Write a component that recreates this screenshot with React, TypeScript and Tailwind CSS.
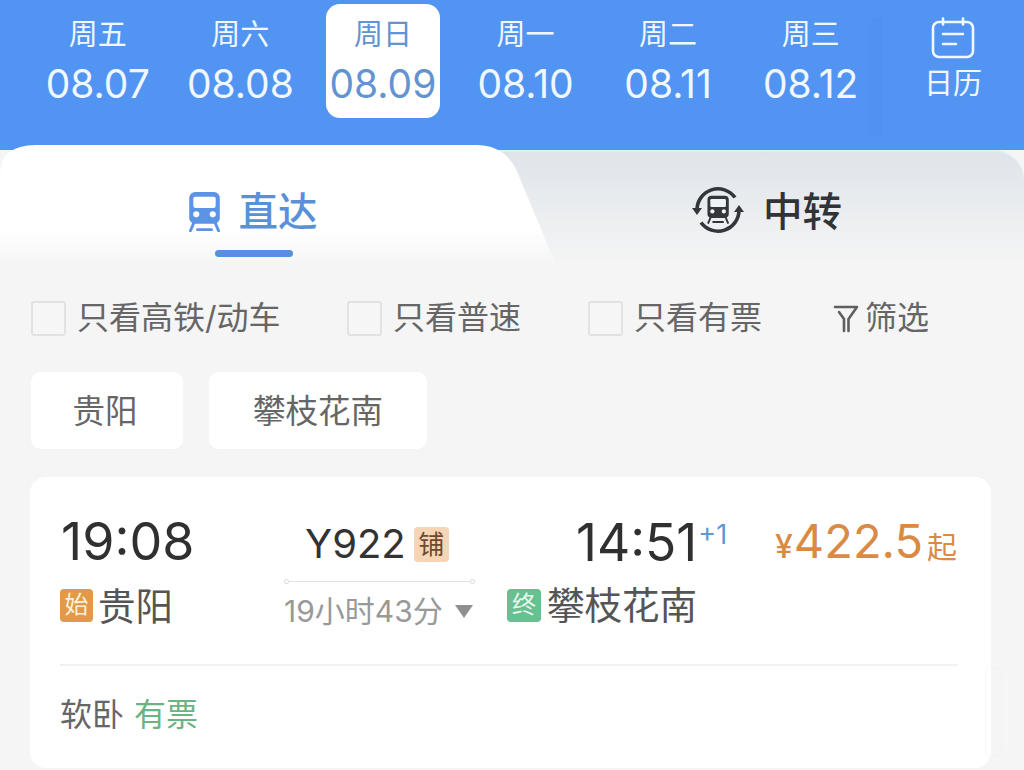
import React from 'react';

const days = [
  { week: '周五', date: '08.07' },
  { week: '周六', date: '08.08' },
  { week: '周日', date: '08.09', active: true },
  { week: '周一', date: '08.10' },
  { week: '周二', date: '08.11' },
  { week: '周三', date: '08.12' },
];

const TrainShape = ({ body, glass }: { body: string; glass: string }) => (
  <>
    <rect x="3" y="1" width="26" height="27" rx="5" fill={body} />
    <rect x="6.5" y="5" width="19" height="9.5" rx="1.5" fill={glass} />
    <circle cx="9" cy="20" r="2.6" fill={glass} />
    <circle cx="23" cy="20" r="2.6" fill={glass} />
    <path d="M7 27 4 34M25 27l3 7M10 33h12" stroke={body} strokeWidth="2.4" strokeLinecap="round" fill="none" />
  </>
);

const Checkbox = () => (
  <span className="block w-[35px] h-[35px] shrink-0 rounded-[3px] border-2 border-[#e2e2e2] bg-[#f6f6f6]" />
);

const App: React.FC = () => {
  return (
    <div className="relative w-[1024px] h-[770px] overflow-hidden bg-[#f5f5f5] font-['Inter','Noto_Sans_CJK_SC',sans-serif]">
      {/* date strip */}
      <header className="flex h-[150px] pl-[26.5px] pt-[4px] bg-[#5294f2] text-[#f0f7ff]">
        {days.map((d) => (
          <div key={d.date} className="w-[142.6px] flex justify-center">
            <div
              className={`flex flex-col items-center w-[114px] h-[114px] rounded-[14px] ${
                d.active ? 'bg-white text-[#6393d0]' : ''
              }`}
            >
              <span className="mt-[9px] text-[29px] leading-[44px]">{d.week}</span>
              <span className="mt-[3px] text-[39px] leading-[48px] whitespace-nowrap">{d.date}</span>
            </div>
          </div>
        ))}
        <div className="relative flex flex-col items-center w-[142px]">
          <span className="absolute left-[-18px] top-[14px] w-[18px] h-[118px] bg-gradient-to-r from-transparent to-[#5091ef]" />
          <svg className="mt-[13px] w-[44px] h-[42px]" viewBox="0 0 44 42" fill="none" stroke="#f0f7ff" strokeWidth="2.6" strokeLinecap="round">
            <rect x="2" y="5" width="40" height="35" rx="6" />
            <path d="M12 1.5v6M32 1.5v6M12 17h20M12 27h13" />
          </svg>
          <span className="mt-[5px] text-[29px] leading-[40px]">日历</span>
        </div>
      </header>

      {/* direct / transfer tabs */}
      <div className="relative flex h-[115px] rounded-t-[30px] border-t-2 border-[#dcf0f6] bg-gradient-to-b from-[#dfe4ea] to-[#f5f5f5]">
        <div className="absolute left-0 top-[-7px] w-[556px] h-[120px] bg-gradient-to-b from-white from-[70%] to-[#f5f5f5] [clip-path:path('M0_30Q0_0_36_0L476_0Q504_0_516_24L556_120L0_120Z')]" />
        <div className="relative w-[510px] flex flex-col items-center">
          <div className="flex items-center gap-[17px] mt-[37px] -ml-[6px] text-[#5a90d8]">
            <svg className="w-[35px] h-[40px]" viewBox="3 1 26 34">
              <TrainShape body="#5b94e4" glass="#ffffff" />
            </svg>
            <span className="text-[39.5px] leading-[46px] font-medium">直达</span>
          </div>
          <span className="mt-[15px] -ml-[2px] w-[78px] h-[7px] rounded-full bg-[#5590e0]" />
        </div>
        <div className="relative flex items-start gap-[18px] pl-[181px] pt-[31px] text-[#303338]">
          <svg className="w-[54px] h-[54px] shrink-0" viewBox="0 0 54 54" fill="none">
            <path d="M6 27A21 21 0 0 1 44 14.5M48 27A21 21 0 0 1 10 39.5" stroke="#33363a" strokeWidth="3.6" />
            <path d="M1 25h10l-5 7zM53 29H43l5-7z" fill="#33363a" />
            <g transform="translate(14 12) scale(.82)">
              <TrainShape body="#33363a" glass="#f0f2f4" />
            </g>
          </svg>
          <span className="mt-[6px] text-[39.5px] leading-[46px] font-medium">中转</span>
        </div>
      </div>

      {/* filters */}
      <div className="flex items-center h-[35px] mt-[36px] pl-[31px] text-[32px] text-[#666666] whitespace-nowrap">
        <Checkbox />
        <span className="ml-[11px] w-[270px] -translate-y-px">只看高铁/动车</span>
        <Checkbox />
        <span className="ml-[11px] w-[195px] -translate-y-px">只看普速</span>
        <Checkbox />
        <span className="ml-[11px] w-[199px] -translate-y-px">只看有票</span>
        <svg className="w-[26px] h-[30px]" viewBox="0 0 26 30" fill="none" stroke="#5f5f5f" strokeWidth="2.6" strokeLinejoin="round" strokeLinecap="round">
          <path d="M2 3h22l-8.5 12v12M11 27V15L6 8" />
        </svg>
        <span className="ml-[6px] -translate-y-px">筛选</span>
      </div>

      {/* stations */}
      <div className="flex gap-[26px] mt-[36px] ml-[31px] text-[32.5px] text-[#666666]">
        <div className="flex items-center justify-center w-[152px] h-[77px] pr-[4px] pt-[3px] rounded-[10px] bg-white">贵阳</div>
        <div className="flex items-center justify-center w-[218px] h-[77px] pt-[3px] rounded-[10px] bg-white">攀枝花南</div>
      </div>

      {/* train card */}
      <div className="mt-[28px] ml-[30px] w-[961px] h-[291px] rounded-[16px] bg-white pl-[30px] pr-[33px]">
        <div className="grid grid-cols-[224px_223px_266px_1fr] h-[187px]">
          <div className="pt-[35px]">
            <div className="text-[52px] leading-[60px] text-[#303030] pl-[1px]">19:08</div>
            <div className="flex items-center mt-[13px] h-[40px]">
              <span className="flex items-center justify-center w-[33px] h-[33px] rounded-[4px] bg-[#e09a4a] text-[24px] text-[#fdf0dc]">始</span>
              <span className="ml-[5px] mt-[4px] text-[37.5px] text-[#555555]">贵阳</span>
            </div>
          </div>
          <div className="pt-[42px]">
            <div className="flex items-center h-[50px] pl-[21px]">
              <span className="text-[40px] leading-[50px] text-[#333333] whitespace-nowrap">Y922</span>
              <span className="flex items-center justify-center w-[35px] h-[35px] ml-[8px] rounded-[4px] bg-[#f5d5b5] text-[26px] text-[#6b4a30]">铺</span>
            </div>
            <div className="flex items-center w-[191px] mt-[10px]">
              <span className="w-[5px] h-[5px] rounded-full border border-[#d8d8d8]" />
              <span className="flex-1 h-px bg-[#e2e2e2]" />
              <span className="w-[5px] h-[5px] rounded-full border border-[#d8d8d8]" />
            </div>
            <div className="flex items-center w-[191px] mt-[7px] h-[40px] text-[#999999]">
              <span className="text-[30px] whitespace-nowrap">19小时43分</span>
              <span className="ml-[12px] w-0 h-0 border-x-[9px] border-x-transparent border-t-[13px] border-t-[#8f8f8f]" />
            </div>
          </div>
          <div className="pt-[35px]">
            <div className="relative ml-[69px] w-max text-[51.5px] leading-[60px] text-[#303030]">
              14:51
              <span className="absolute left-full top-[5px] ml-[1px] text-[27px] leading-[36px] text-[#5e97d8]">+1</span>
            </div>
            <div className="flex items-center mt-[13px] h-[40px]">
              <span className="flex items-center justify-center w-[34px] h-[33px] rounded-[4px] bg-[#68bf8f] text-[24px] text-[#e8f7ee]">终</span>
              <span className="ml-[6px] mt-[3px] text-[37.5px] text-[#555555] whitespace-nowrap">攀枝花南</span>
            </div>
          </div>
          <div className="flex items-baseline justify-end pt-[34px] pr-[1px] h-fit text-[#d98a45] leading-[60px] whitespace-nowrap">
            <span className="text-[32px] font-medium">¥</span>
            <span className="text-[47px] ml-[1px]">422.5</span>
            <span className="text-[30px] ml-[4px]">起</span>
          </div>
        </div>
        <div className="h-[2px] bg-[#f2f2f2]" />
        <div className="flex items-center h-[98px] text-[32px]">
          <span className="text-[#666666]">软卧</span>
          <span className="ml-[10px] text-[#6cb384]">有票</span>
        </div>
      </div>

      {/* faint watermark */}
      <span className="absolute left-[985px] top-[664px] w-[22px] h-[96px] rounded-[10px] border border-[#f9f9f9]" />
    </div>
  );
};

export default App;
